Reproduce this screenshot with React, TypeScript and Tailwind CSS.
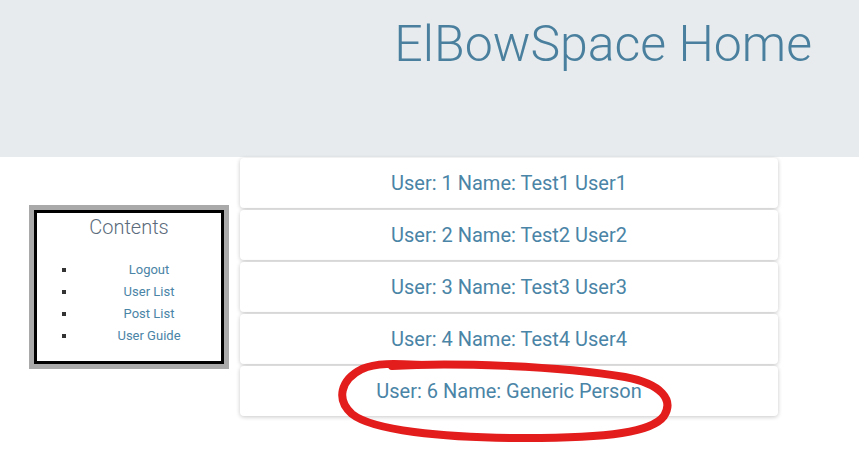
import React from "react";

const users = [
  "User: 1 Name: Test1 User1",
  "User: 2 Name: Test2 User2",
  "User: 3 Name: Test3 User3",
  "User: 4 Name: Test4 User4",
  "User: 6 Name: Generic Person",
];

export default function App() {
  return (
    <div
      className="relative w-[859px] h-[449px] bg-white overflow-hidden"
      style={{ fontFamily: "Roboto, 'Liberation Sans', sans-serif" }}
    >
      <header className="h-[157px] bg-[#e7ebee] flex justify-end pr-[47px]">
        <h1 className="mt-[14px] text-[50px] leading-[60px] font-light text-[#4a809e]">
          ElBowSpace Home
        </h1>
      </header>
      <div className="flex">
        <div className="w-[240px] shrink-0 pl-[29px] pt-[48px]">
          <div className="w-[200px] h-[164px] border-[5px] border-[#a9a9a9]">
            <div className="h-full border-[3px] border-black">
              <h2 className="text-center text-[20px] leading-[24px] font-light text-[#5b6b7b] mt-[2px]">
                Contents
              </h2>
              <ul className="list-[square] pl-[40px] mt-[20px] text-[13px] leading-[22px] text-[#4a84a6] marker:text-[#333]">
                <li className="text-center">Logout</li>
                <li className="text-center">User List</li>
                <li className="text-center">Post List</li>
                <li className="text-center">User Guide</li>
              </ul>
            </div>
          </div>
        </div>
        <div className="w-[538px] flex flex-col gap-[2px] pt-[1px]">
          {users.map((u) => (
            <div
              key={u}
              className="h-[50px] bg-white rounded-[4px] shadow-[0_1px_4px_rgba(0,0,0,0.22)] flex items-center justify-center text-[20px] text-[#4a84a6]"
            >
              {u}
            </div>
          ))}
        </div>
      </div>
      <svg
        className="absolute inset-0 pointer-events-none"
        width="859"
        height="449"
        viewBox="0 0 859 449"
      >
        <path
          d="M 392 366 C 450 362, 560 366, 625 377 C 662 384, 674 400, 664 416 C 652 432, 610 438, 525 438 C 440 438, 372 430, 352 414 C 336 400, 340 380, 362 369 C 378 362, 400 364, 425 365"
          fill="none"
          stroke="#e31c1c"
          strokeWidth="8"
          strokeLinecap="round"
          strokeLinejoin="round"
        />
      </svg>
    </div>
  );
}
